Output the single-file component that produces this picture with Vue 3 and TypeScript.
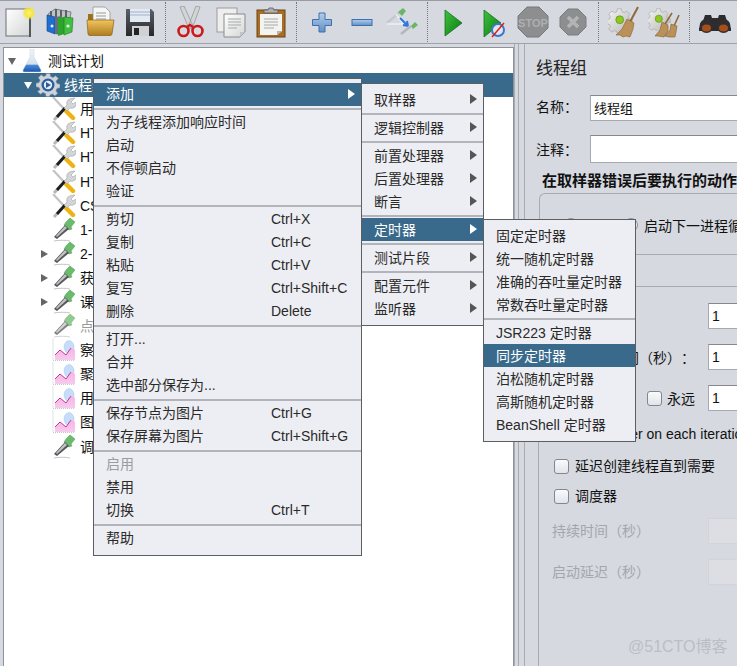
<script setup lang="ts">
interface MenuItem {
  label?: string
  key?: string
  arrow?: boolean
  active?: boolean
  disabled?: boolean
  sep?: boolean
}

interface TreeRow {
  label: string
  depth: number
  icon: string
  arrow?: 'open' | 'closed'
  selected?: boolean
  muted?: boolean
}

const tools: (string | null)[] = [
  'new', 'templates', 'open', 'save', null,
  'cut', 'copy', 'paste', null,
  'plus', 'minus', 'toggle', null,
  'play', 'playnt', 'stop', 'shut', null,
  'clear', 'clearall', null,
  'find'
]

const rows: TreeRow[] = [
  { label: '测试计划', depth: 0, icon: 'flask', arrow: 'open' },
  { label: '线程组', depth: 1, icon: 'gear', arrow: 'open', selected: true },
  { label: '用户定义的变量', depth: 2, icon: 'wrench' },
  { label: 'HTTP请求默认值', depth: 2, icon: 'wrench' },
  { label: 'HTTP信息头管理器', depth: 2, icon: 'wrench' },
  { label: 'HTTP Cookie 管理器', depth: 2, icon: 'wrench' },
  { label: 'CSV 数据文件设置', depth: 2, icon: 'wrench' },
  { label: '1-登录', depth: 2, icon: 'dropper' },
  { label: '2-首页', depth: 2, icon: 'dropper', arrow: 'closed' },
  { label: '获取课程', depth: 2, icon: 'dropper', arrow: 'closed' },
  { label: '课程详情', depth: 2, icon: 'dropper', arrow: 'closed' },
  { label: '点赞', depth: 2, icon: 'dropper', muted: true },
  { label: '察看结果树', depth: 2, icon: 'graph' },
  { label: '聚合报告', depth: 2, icon: 'graph' },
  { label: '用表格察看结果', depth: 2, icon: 'graph' },
  { label: '图形结果', depth: 2, icon: 'graph' },
  { label: '调试取样器', depth: 2, icon: 'dropper' }
]

const mainMenu: MenuItem[] = [
  { label: '添加', arrow: true, active: true },
  { sep: true },
  { label: '为子线程添加响应时间' },
  { label: '启动' },
  { label: '不停顿启动' },
  { label: '验证' },
  { sep: true },
  { label: '剪切', key: 'Ctrl+X' },
  { label: '复制', key: 'Ctrl+C' },
  { label: '粘贴', key: 'Ctrl+V' },
  { label: '复写', key: 'Ctrl+Shift+C' },
  { label: '删除', key: 'Delete' },
  { sep: true },
  { label: '打开...' },
  { label: '合并' },
  { label: '选中部分保存为...' },
  { sep: true },
  { label: '保存节点为图片', key: 'Ctrl+G' },
  { label: '保存屏幕为图片', key: 'Ctrl+Shift+G' },
  { sep: true },
  { label: '启用', disabled: true },
  { label: '禁用' },
  { label: '切换', key: 'Ctrl+T' },
  { sep: true },
  { label: '帮助' }
]

const addMenu: MenuItem[] = [
  { label: '取样器', arrow: true },
  { sep: true },
  { label: '逻辑控制器', arrow: true },
  { sep: true },
  { label: '前置处理器', arrow: true },
  { label: '后置处理器', arrow: true },
  { label: '断言', arrow: true },
  { sep: true },
  { label: '定时器', arrow: true, active: true },
  { sep: true },
  { label: '测试片段', arrow: true },
  { sep: true },
  { label: '配置元件', arrow: true },
  { label: '监听器', arrow: true }
]

const timerMenu: MenuItem[] = [
  { label: '固定定时器' },
  { label: '统一随机定时器' },
  { label: '准确的吞吐量定时器' },
  { label: '常数吞吐量定时器' },
  { sep: true },
  { label: 'JSR223 定时器' },
  { label: '同步定时器', active: true },
  { label: '泊松随机定时器' },
  { label: '高斯随机定时器' },
  { label: 'BeanShell 定时器' }
]

const menus = [
  { name: 'main', items: mainMenu },
  { name: 'add', items: addMenu },
  { name: 'timer', items: timerMenu }
]
</script>

<template>
  <div class="app">
    <svg class="defs" width="0" height="0">
      <defs>
        <linearGradient id="gPage" x1="0" y1="0" x2="1" y2="1"><stop offset="0" stop-color="#ffffff" /><stop offset="1" stop-color="#d4d6d6" /></linearGradient>
        <radialGradient id="gGlow"><stop offset="0" stop-color="#fff27a" /><stop offset="0.55" stop-color="#f6e640" /><stop offset="1" stop-color="#f6e640" stop-opacity="0" /></radialGradient>
        <linearGradient id="gFolder" x1="0" y1="0" x2="0" y2="1"><stop offset="0" stop-color="#f0c560" /><stop offset="1" stop-color="#b07c1c" /></linearGradient>
        <linearGradient id="gDisk" x1="0" y1="0" x2="0" y2="1"><stop offset="0" stop-color="#5c6068" /><stop offset="1" stop-color="#26282c" /></linearGradient>
        <linearGradient id="gBlue" x1="0" y1="0" x2="0" y2="1"><stop offset="0" stop-color="#b4cdea" /><stop offset="1" stop-color="#5f90c8" /></linearGradient>
        <linearGradient id="gPlay" x1="0" y1="0" x2="1" y2="1"><stop offset="0" stop-color="#3fc23f" /><stop offset="1" stop-color="#0a7a12" /></linearGradient>
        <linearGradient id="gGear" x1="0" y1="0" x2="1" y2="1"><stop offset="0" stop-color="#f6f6f6" /><stop offset="1" stop-color="#b4b4b4" /></linearGradient>
        <linearGradient id="gFlask" x1="0" y1="0" x2="0" y2="1"><stop offset="0" stop-color="#f2f5fa" /><stop offset="0.66" stop-color="#d6e0ee" /><stop offset="0.7" stop-color="#4a88d8" /><stop offset="1" stop-color="#1c56ad" /></linearGradient>
        <linearGradient id="gGraph" x1="0" y1="0" x2="0" y2="1"><stop offset="0" stop-color="#f7b4e4" /><stop offset="1" stop-color="#f5cbee" /></linearGradient>

        <symbol id="i-new" viewBox="0 0 32 32">
          <rect x="2" y="3" width="24" height="27" fill="url(#gPage)" stroke="#6e7072" />
          <rect x="25" y="5" width="2" height="26" fill="#55585a" />
          <circle cx="25" cy="7" r="7" fill="url(#gGlow)" />
        </symbol>
        <symbol id="i-templates" viewBox="0 0 32 32">
          <path d="M4 8 L11 3 L27 6 L26 12 L6 14Z" fill="#bfc3c6" stroke="#7e8286" />
          <path d="M6 5h2v8H6zM11 3h2v8h-2zM16 4h2v8h-2zM21 4h2v8h-2z" fill="#5d6064" />
          <path d="M3 9l8 2v17l-8-3z" fill="#1f6fd0" stroke="#113f82" stroke-width=".6" />
          <path d="M11 11l7-1v19l-7-1z" fill="#62707c" />
          <path d="M14 12l6-1v17l-6 2z" fill="#2da52d" />
          <path d="M20 11l9 1-1 14-8 3z" fill="#40bf40" stroke="#177a1c" stroke-width=".6" />
          <circle cx="24" cy="20" r="1.600" fill="#e8f5e8" />
          <circle cx="8" cy="20" r="1.500" fill="#e8eef8" />
        </symbol>
        <symbol id="i-open" viewBox="0 0 32 32">
          <path d="M4 8h9l2 2h11v8H4z" fill="#9c6f18" />
          <path d="M9 1h12l5 5v14H9z" fill="#f6f6f4" stroke="#8a8a88" stroke-width=".7" />
          <path d="M12 7h10M12 10h10M12 13h10" stroke="#9a9a9a" stroke-width="1" />
          <path d="M3 14h27l-2 14q-.2 1.500-2 1.500H6q-1.800 0-2-1.500z" fill="url(#gFolder)" stroke="#8c6112" stroke-width=".7" />
        </symbol>
        <symbol id="i-save" viewBox="0 0 32 32">
          <path d="M2 3h25l3 3v24H2z" fill="url(#gDisk)" />
          <rect x="6" y="3" width="20" height="13" fill="#e4eaf2" />
          <path d="M6 6h20M6 9h20" stroke="#9db2cc" stroke-width="1" />
          <rect x="8" y="20" width="17" height="10" fill="#cfd1d2" />
          <rect x="10" y="22" width="5" height="7" fill="#232427" />
        </symbol>
        <symbol id="i-cut" viewBox="0 0 32 32">
          <path d="M5 1l4-1 9 20-4 3zM25 1l-4-1-8 21 4 2z" fill="#d2d4d5" stroke="#8e9092" stroke-width=".7" />
          <circle cx="8.500" cy="25" r="5" fill="none" stroke="#cc1a1a" stroke-width="2.600" />
          <circle cx="22.500" cy="25" r="5" fill="none" stroke="#cc1a1a" stroke-width="2.600" />
          <path d="M12 21l3-2 3 2" fill="none" stroke="#cc1a1a" stroke-width="2.500" />
        </symbol>
        <symbol id="i-copy" viewBox="0 0 32 32">
          <rect x="2" y="2" width="20" height="24" fill="#eeeeec" stroke="#9a9c9c" />
          <path d="M9 8h21v18l-5 5H9z" fill="url(#gPage)" stroke="#8a8c8c" />
          <path d="M13 13h13M13 16h13M13 19h13M13 22h9" stroke="#a6a8a8" />
          <path d="M25 31v-5h5z" fill="#c4c6c6" />
        </symbol>
        <symbol id="i-paste" viewBox="0 0 32 32">
          <rect x="2" y="4" width="28" height="27" fill="#a96d26" stroke="#6c4413" />
          <path d="M5 8h22v17l-5 4H5z" fill="#f3f3f1" />
          <path d="M9 13h14M9 16h14M9 19h14M9 22h10" stroke="#a8a8a8" />
          <path d="M22 29v-4h5z" fill="#b4b6b6" />
          <path d="M9 7V4h4l1-2h4l1 2h4v3z" fill="#aeb0b0" stroke="#58595a" stroke-width=".8" />
        </symbol>
        <symbol id="i-plus" viewBox="0 0 32 32">
          <path d="M13 7h6v6.500h6.500v6H19V26h-6v-6.500H6.500v-6H13z" fill="url(#gBlue)" stroke="#3f70ac" />
        </symbol>
        <symbol id="i-minus" viewBox="0 0 32 32">
          <rect x="6" y="13.500" width="20" height="6" fill="url(#gBlue)" stroke="#3f70ac" />
        </symbol>
        <symbol id="i-toggle" viewBox="0 0 32 32">
          <path d="M1 17L13 7" stroke="#c6c8ca" stroke-width="2.400" />
          <path d="M1 18H17L10 8" fill="none" stroke="#eef0f2" stroke-width="1.400" />
          <path d="M12 6l5-4 3 3-4 5z" fill="#6bb56b" />
          <path d="M15 28l10-8" stroke="#b4b6b8" stroke-width="2.400" />
          <path d="M25 20l4-4 3 3-5 4z" fill="#6bb56b" />
          <path d="M14 12l7 7M22 20l-1-5M22 20l-5-1" stroke="#2e78e0" stroke-width="2" fill="none" />
        </symbol>
        <symbol id="i-play" viewBox="0 0 32 32">
          <path d="M8 4l17 13L8 30z" fill="url(#gPlay)" stroke="#08660e" stroke-width=".7" />
        </symbol>
        <symbol id="i-playnt" viewBox="0 0 32 32">
          <path d="M7 4l17 13L7 31z" fill="url(#gPlay)" stroke="#08660e" stroke-width=".7" />
          <circle cx="21" cy="24" r="6" fill="#dfe6f2" stroke="#3c78c8" stroke-width="2" />
          <path d="M15 31L27 17" stroke="#e01818" stroke-width="1.400" />
        </symbol>
        <symbol id="i-stop" viewBox="0 0 32 32">
          <path d="M10 1h12l9 9v12l-9 9H10l-9-9V10z" fill="#8d8e90" stroke="#77787a" />
          <text x="16" y="20.500" text-anchor="middle" font-family="Liberation Sans, sans-serif" font-weight="700" font-size="11" fill="#aeafb1">STOP</text>
        </symbol>
        <symbol id="i-shut" viewBox="0 0 32 32">
          <path d="M11 3h10l8 8v10l-8 8H11l-8-8V11z" fill="#8d8e90" stroke="#7c7d7f" />
          <path d="M11 11l10 10M21 11L11 21" stroke="#b3b4b6" stroke-width="3.600" />
        </symbol>
        <symbol id="i-gearbig" viewBox="0 0 32 32">
          <path d="M12 1h5l1 4 3 1 3-2 4 4-2 3 1 3 4 1v5l-4 1-1 3 2 3-4 4-3-2-3 1-1 4h-5l-1-4-3-1-3 2-4-4 2-3-1-3-4-1v-5l4-1 1-3-2-3 4-4 3 2 3-1z" fill="url(#gGear)" stroke="#9a9a9a" stroke-width=".7" />
          <circle cx="15" cy="15" r="5" fill="#8cc820" stroke="#64941a" />
        </symbol>
        <symbol id="i-clear" viewBox="0 0 32 32">
          <use href="#i-gearbig" x="0" y="2" width="25" height="25" />
          <path d="M30 1L22 16" stroke="#8f6a3a" stroke-width="2" />
          <path d="M19 13l7 4-1 6-3 8-4-1-3 1-3-2-4 0 6-6z" fill="#bb9159" stroke="#806034" stroke-width=".6" />
        </symbol>
        <symbol id="i-clearall" viewBox="0 0 32 32">
          <use href="#i-gearbig" x="0" y="2" width="23" height="23" />
          <path d="M24 7L17 18M31 9L26 20" stroke="#8f6a3a" stroke-width="1.600" />
          <path d="M14 16l6 3 0 6-4 6-6-1-3 0 5-6z" fill="#bb9159" stroke="#806034" stroke-width=".6" />
          <path d="M23 18l6 2-1 6-1 5-6 0-4-1 5-6z" fill="#bb9159" stroke="#806034" stroke-width=".6" />
        </symbol>
        <symbol id="i-find" viewBox="0 0 32 32">
          <path d="M6 9h6l1 3h6l1-3h6l3 9 3 4v3H0v-3l3-4z" fill="#2c2c2e" />
          <circle cx="7.500" cy="20" r="7" fill="#2e2e30" />
          <circle cx="24.500" cy="20" r="7" fill="#2e2e30" />
          <ellipse cx="7.500" cy="22" rx="4.500" ry="3.500" fill="#a84e18" />
          <ellipse cx="24.500" cy="22" rx="4.500" ry="3.500" fill="#a84e18" />
        </symbol>

        <symbol id="t-flask" viewBox="0 0 24 24">
          <path d="M10 0h4v8l7 13q.6 2-1 2H4q-1.600 0-1-2l7-13z" fill="url(#gFlask)" stroke="#c6d2e0" stroke-width=".5" />
        </symbol>
        <symbol id="t-gear" viewBox="0 0 24 24">
          <path d="M10 1h4l.6 3 2.400 1 2.600-1.700 2.800 2.800L20 8.700l1 2.400 3 .6v3.600l-3 .6-1 2.400 1.700 2.600-2.800 2.400-2.600-1.700-2.400 1L14 24h-4l-.6-3-2.400-1-2.600 1.700-2.800-2.800L4 17.300l-1-2.400-3-.6v-3.600l3-.6 1-2.400L2.300 5.100l2.800-2.800L7.700 4l2.400-1z" transform="translate(0 -.5)" fill="#ccd3dc" stroke="#7c8a9a" stroke-width=".6" />
          <circle cx="12" cy="12" r="6.500" fill="#2b5c9c" />
          <circle cx="12" cy="12" r="4.200" fill="#e8eef6" />
          <path d="M10 9l5 3-5 3z" fill="#2b5c9c" />
        </symbol>
        <symbol id="t-wrench" viewBox="0 0 24 24">
          <path d="M1 0l12 13" stroke="#c2c3c5" stroke-width="2.200" />
          <path d="M13 13l8 8" stroke="#eeb212" stroke-width="4.400" stroke-linecap="round" />
          <path d="M2 23l11-12" stroke="#b6b7b9" stroke-width="3" />
          <path d="M5 20l8-9" stroke="#1e1e1e" stroke-width="2.800" />
          <path d="M23 1l-4 4 2 2 3-2q1 3-1 5t-5 1l-3 3-3-3 3-3q-1-3 1-5t7-2z" fill="#d4d5d7" stroke="#96989a" stroke-width=".5" />
        </symbol>
        <symbol id="t-dropper" viewBox="0 0 24 24">
          <path d="M14 4l4-4 5 4-4 5 1 2-3 1-5-5z" fill="#6cba6c" stroke="#4f9c4f" stroke-width=".5" />
          <path d="M13 7l4 4L5 21 2 19z" fill="#55565a" />
          <path d="M13 8l2 2L5 19l-1-1z" fill="#c0c2c4" />
          <path d="M2 23c5-1 12-1 16 0" stroke="#c4c5c7" stroke-width="1" fill="none" />
        </symbol>
        <symbol id="t-graph" viewBox="0 0 24 24">
          <path d="M1 .5V22.500H23" fill="none" stroke="#c4c6c8" stroke-dasharray="1 1" />
          <ellipse cx="17" cy="9" rx="5" ry="6.500" fill="#c6dcf8" stroke="#a8c6ec" stroke-width=".5" />
          <path d="M3 17l5-5 6 5 5-7 4 2v10H3z" fill="url(#gGraph)" />
          <path d="M3 17l5-5 6 5 5-7" fill="none" stroke="#c8349c" stroke-width="1" />
        </symbol>
      </defs>
    </svg>

    <div class="toolbar">
      <template v-for="(tool, i) in tools" :key="i">
        <span v-if="tool === null" class="tool-sep"></span>
        <span v-else class="tool">
          <svg width="32" height="32"><use :href="'#i-' + tool" /></svg>
        </span>
      </template>
    </div>

    <div class="main">
      <div class="tree">
        <div
          v-for="row in rows"
          :key="row.label"
          class="tree-row"
          :class="{ selected: row.selected, muted: row.muted }"
          :style="{ paddingLeft: row.depth * 16 + 'px' }"
        >
          <span class="twist">
            <i v-if="row.arrow" :class="row.arrow"></i>
          </span>
          <svg class="tree-icon" :class="{ faded: row.muted }" width="24" height="24"><use :href="'#t-' + row.icon" /></svg>
          <span class="tree-label">{{ row.label }}</span>
        </div>
      </div>

      <div class="splitter"></div>

      <div class="editor">
        <div class="title">线程组</div>
        <div class="field name-field">
          <label>名称：</label>
          <div class="input">线程组</div>
        </div>
        <div class="field note-field">
          <label>注释：</label>
          <div class="input"></div>
        </div>
        <div class="error-title">在取样器错误后要执行的动作</div>
        <div class="error-box">
          <span class="radio"></span><span class="radio-text">继续</span>
          <span class="radio"></span><span class="radio-text">启动下一进程循环</span>
        </div>
        <div class="thread-box">
          <div class="prop-row"><span class="prop-label">线程数：</span><div class="input num">1</div></div>
          <div class="prop-row"><span class="prop-label">Ramp-Up时间（秒）：</span><div class="input num">1</div></div>
          <div class="prop-row">
            <span class="prop-label loop">循环次数</span>
            <span class="check"></span><span class="forever">永远</span>
            <div class="input num">1</div>
          </div>
          <div class="check-row same-user"><span class="check"></span><span>Same user on each iteration</span></div>
          <div class="check-row delay"><span class="check"></span><span class="cjk">延迟创建线程直到需要</span></div>
          <div class="check-row sched"><span class="check"></span><span class="cjk">调度器</span></div>
          <div class="prop-row off duration"><span class="prop-label">持续时间（秒）</span><div class="input"></div></div>
          <div class="prop-row off startup"><span class="prop-label">启动延迟（秒）</span><div class="input"></div></div>
        </div>
      </div>
    </div>

    <div class="watermark">@51CTO博客</div>

    <div v-for="menu in menus" :key="menu.name" class="menu" :class="'menu-' + menu.name">
      <template v-for="(item, i) in menu.items" :key="i">
        <div v-if="item.sep" class="menu-sep"></div>
        <div v-else class="menu-item" :class="{ active: item.active, disabled: item.disabled }">
          <span class="menu-label">{{ item.label }}</span>
          <span v-if="item.key" class="menu-key">{{ item.key }}</span>
          <i v-if="item.arrow" class="menu-arrow"></i>
        </div>
      </template>
    </div>
  </div>
</template>

<style scoped>
.app {
  position: relative;
  width: 737px;
  height: 666px;
  overflow: hidden;
  display: flex;
  flex-direction: column;
  background: #d6d9e0;
  color: #111;
  font-family: "Liberation Sans", "Noto Sans CJK SC", sans-serif;
  font-size: 14px;
  text-spacing-trim: space-all;
}

.defs {
  position: absolute;
}

.toolbar {
  display: flex;
  align-items: center;
  flex: none;
  height: 44px;
  box-sizing: border-box;
  border-top: 1px solid #9a9ca4;
  border-bottom: 1px solid #9ea1a8;
}

.tool {
  flex: none;
  width: 40px;
  display: flex;
  justify-content: center;
}

.tool-sep {
  flex: none;
  width: 5px;
  margin-right: 5px;
  height: 40px;
  border-right: 1px dotted #777;
}

.main {
  display: flex;
  flex: 1;
  min-height: 0;
  padding: 3px 0 0 3px;
}

.tree {
  flex: none;
  width: 511px;
  box-sizing: border-box;
  padding-top: 1px;
  background: #fff;
  border: 1px solid #8f9298;
  border-bottom: 0;
}

.tree-row {
  display: flex;
  align-items: center;
  height: 24.1px;
  white-space: nowrap;
}

.tree-row.selected {
  background: #396a8c;
  color: #fff;
}

.tree-row.muted .tree-label {
  color: #9a9a9a;
}

.twist {
  flex: none;
  width: 16px;
  display: flex;
  justify-content: center;
}

.twist .open {
  width: 0;
  height: 0;
  border-left: 4px solid transparent;
  border-right: 4px solid transparent;
  border-top: 7px solid #666;
}

.selected .twist .open {
  border-top-color: #fff;
}

.twist .closed {
  width: 0;
  height: 0;
  border-top: 4px solid transparent;
  border-bottom: 4px solid transparent;
  border-left: 7px solid #666;
}

.tree-icon {
  flex: none;
}

.tree-icon.faded {
  opacity: 0.75;
}

.tree-label {
  margin-left: 4px;
  padding-bottom: 2px;
}

.splitter {
  flex: none;
  width: 11px;
  box-sizing: border-box;
  margin-top: -3px;
  border-left: 1px solid #a8abb2;
  border-right: 1px solid #a8abb2;
  background: linear-gradient(90deg, #d6d9e0 3px, #a8abb2 3px, #a8abb2 4px, #d6d9e0 4px);
}

.editor {
  flex: 1;
  min-width: 0;
  overflow: hidden;
  padding-left: 11px;
}

.title {
  margin-top: 10px;
  height: 24px;
  line-height: 24px;
  font-size: 17px;
  color: #222;
}

.field {
  display: flex;
  align-items: center;
}

.field label {
  flex: none;
  width: 54px;
  font-size: 14px;
  padding-bottom: 5px;
}

.input {
  flex: none;
  width: 200px;
  box-sizing: border-box;
  padding-left: 3px;
  background: #fff;
  border: 1px solid #a6a9b0;
  border-top-color: #85888e;
  font-size: 13px;
}

.name-field {
  margin-top: 14px;
}

.name-field .input {
  height: 26px;
  line-height: 26px;
}

.note-field {
  margin-top: 14px;
}

.note-field label {
  padding-bottom: 0;
}

.note-field .input {
  height: 28px;
}

.error-title {
  margin-top: 8px;
  margin-left: 6px;
  height: 20px;
  line-height: 20px;
  font-size: 15px;
  font-weight: 700;
  white-space: nowrap;
}

.error-box {
  display: flex;
  align-items: center;
  margin: 2px -40px 0 3px;
  height: 62px;
  box-sizing: border-box;
  padding: 2px 0 0 24px;
  border: 1px solid #a8abb2;
  border-radius: 6px 0 0 0;
  border-right: 0;
  white-space: nowrap;
}

.radio {
  flex: none;
  width: 12px;
  height: 12px;
  border-radius: 50%;
  border: 1px solid #8d9096;
  background: #eceef2;
  margin-right: 6px;
}

.radio-text {
  margin-right: 12px;
}

.thread-box {
  margin: 31px -40px 0 2px;
  height: 400px;
  padding-top: 16px;
  padding-left: 12px;
  box-sizing: border-box;
  border-top: 1px solid #a8abb2;
  border-left: 1px solid #a8abb2;
}

.prop-row {
  display: flex;
  align-items: center;
  height: 26px;
  margin-bottom: 15px;
  white-space: nowrap;
}

.prop-label {
  flex: none;
  width: 157px;
}

.prop-label.loop {
  width: 96px;
}

.prop-row .input {
  width: 60px;
  height: 26px;
  line-height: 24px;
  font-size: 14px;
}

.forever {
  flex: none;
  width: 46px;
  box-sizing: border-box;
  padding-left: 5px;
}

.check {
  flex: none;
  display: inline-block;
  width: 13px;
  height: 13px;
  border: 1px solid #83868c;
  border-radius: 3px;
  background: linear-gradient(#fafafc, #e2e4ea);
}

.check-row {
  display: flex;
  align-items: center;
  gap: 6px;
  padding-left: 3px;
  height: 24px;
  white-space: nowrap;
}

.check-row .cjk {
  padding-bottom: 2px;
}

.same-user {
  margin-top: -4px;
}

.delay {
  margin-top: 8px;
}

.sched {
  margin-top: 6px;
}

.prop-row.off {
  color: #a4a6ac;
  margin-bottom: 0;
}

.prop-row.off .prop-label {
  margin-left: 1px;
  width: 156px;
  padding-bottom: 2px;
}

.prop-row.off .input {
  background: #dcdee3;
  border-color: #d2d4da;
}

.duration {
  margin-top: 10px;
}

.startup {
  margin-top: 15px;
}

.watermark {
  position: absolute;
  left: 628px;
  top: 636px;
  font-size: 16px;
  line-height: 22px;
  color: #bcbec3;
  white-space: nowrap;
}

.menu {
  position: absolute;
  box-sizing: border-box;
  padding: 4px 0 5px;
  background: #edeef3;
  border: 1px solid #5c5e62;
  color: #2a2a2a;
}

.menu-main {
  left: 93px;
  top: 78px;
  width: 269px;
}

.menu-add {
  left: 361px;
  top: 83px;
  width: 123px;
}

.menu-timer {
  left: 483px;
  top: 219px;
  width: 153px;
}

.menu-item {
  position: relative;
  display: flex;
  align-items: center;
  box-sizing: border-box;
  height: 23px;
  padding-left: 12px;
  padding-bottom: 4px;
  white-space: nowrap;
}

.menu-add .menu-item,
.menu-timer .menu-item {
  padding-bottom: 2px;
}

.menu-item.active {
  background: #396a8c;
  color: #fff;
}

.menu-item.disabled {
  color: #9a9ca2;
}

.menu-key {
  position: absolute;
  left: 177px;
  top: 3px;
}

.menu-arrow {
  position: absolute;
  right: 6px;
  top: 6px;
  width: 0;
  height: 0;
  border-top: 5px solid transparent;
  border-bottom: 5px solid transparent;
  border-left: 7px solid #555;
}

.menu-item.active .menu-arrow {
  border-left-color: #fff;
}

.menu-sep {
  height: 2px;
  margin: 2px 0 1px;
  background: #b2b4ba;
}
</style>
